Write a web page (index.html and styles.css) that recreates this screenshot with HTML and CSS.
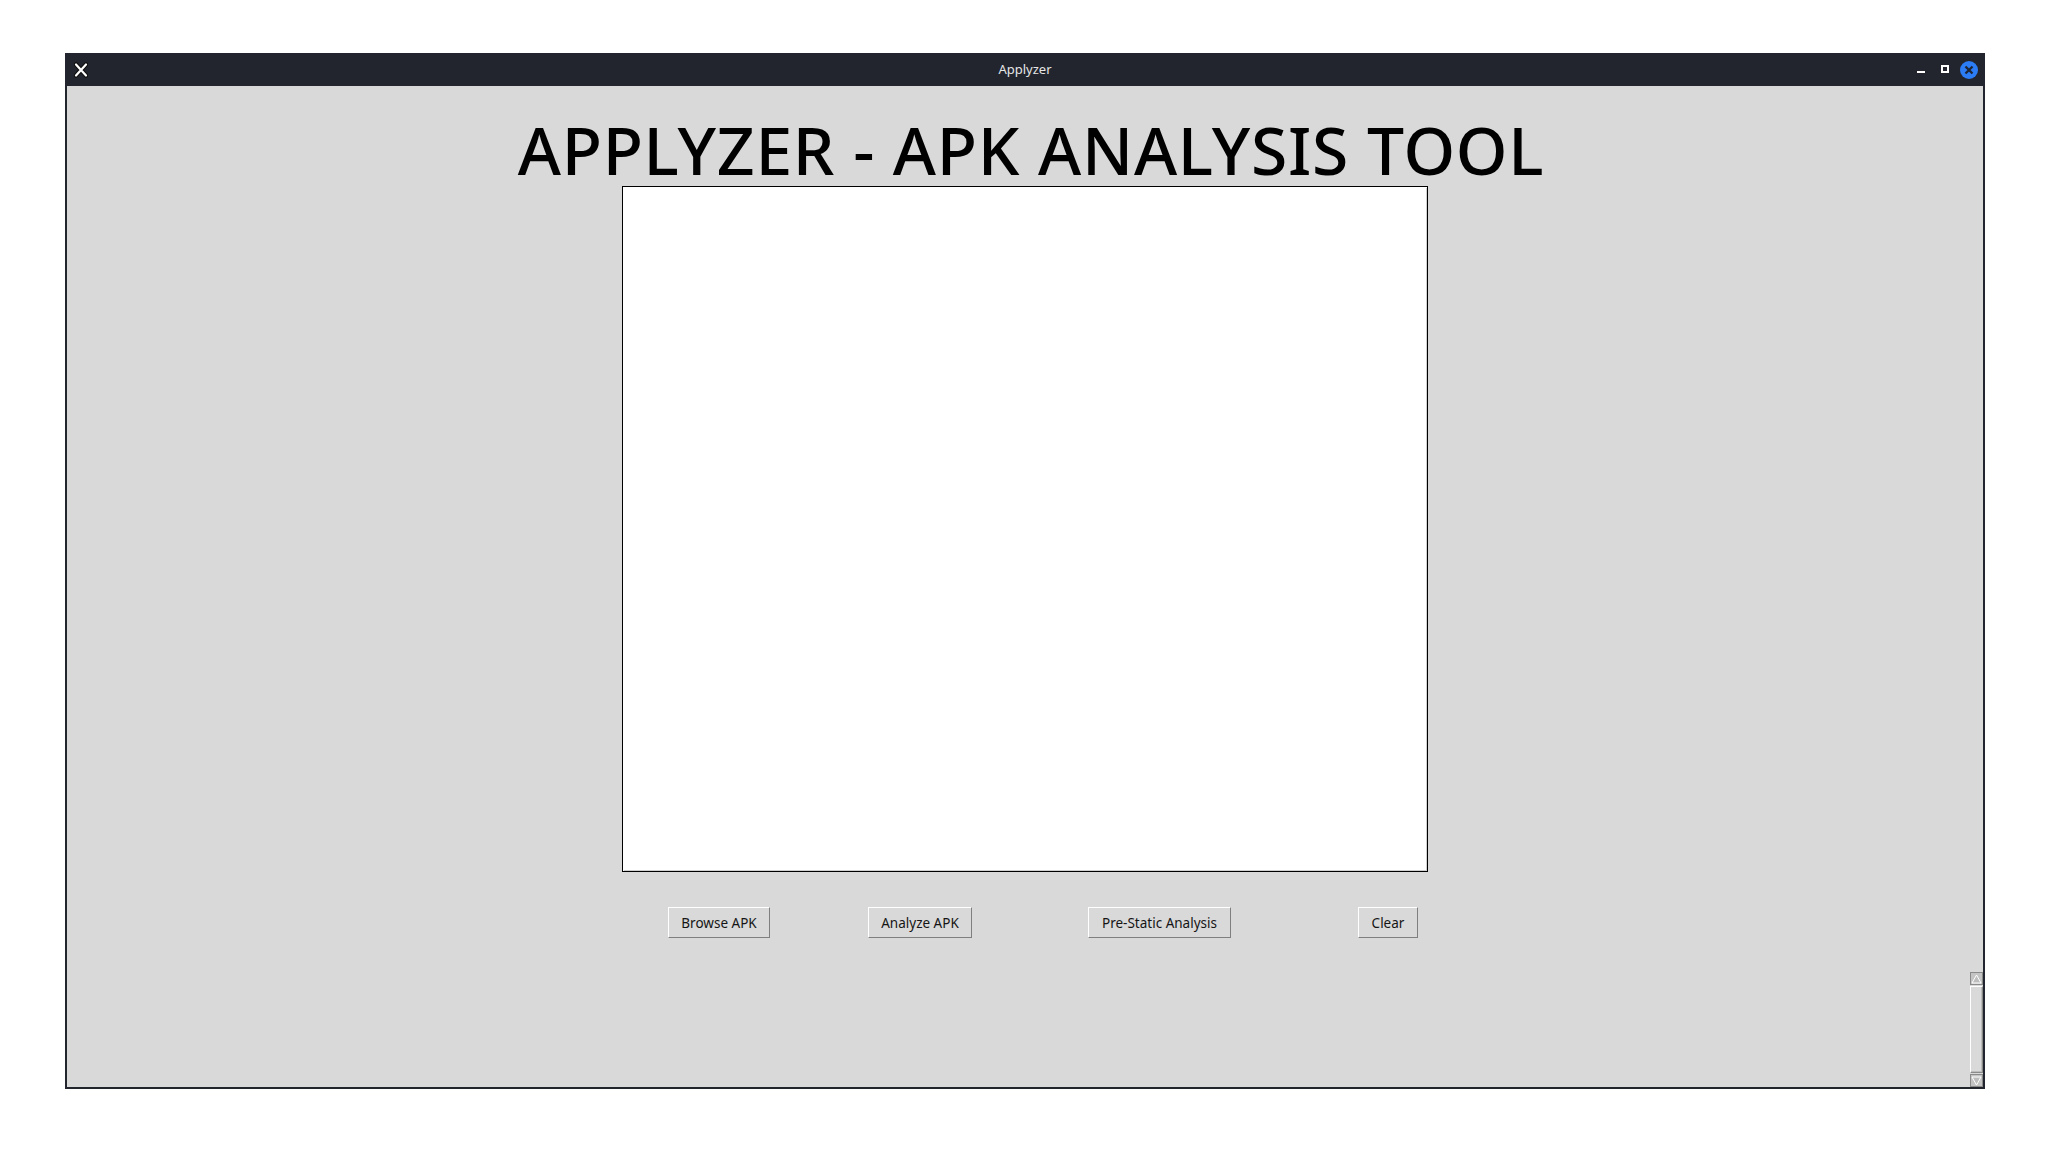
FILE: index.html
```html
<!DOCTYPE html>
<html>
<head>
<meta charset="utf-8">
<title>Applyzer</title>
<link rel="stylesheet" href="styles.css">
</head>
<body>
<div class="window">
  <div class="titlebar">
    <div class="tb-left">
      <svg class="tb-x" width="14" height="16" viewBox="0 0 14 16">
        <path d="M2 2.5 L12 13.5 M12 2.5 L2 13.5" stroke="#111" stroke-width="4.5" stroke-linecap="round"/>
        <path d="M2 2.5 L12 13.5 M12 2.5 L2 13.5" stroke="#fff" stroke-width="2.2" stroke-linecap="round"/>
      </svg>
    </div>
    <div class="tb-title">Applyzer</div>
    <div class="tb-right">
      <span class="tb-min"></span>
      <span class="tb-max"></span>
      <svg class="tb-close" width="18" height="18" viewBox="0 0 18 18">
        <circle cx="9" cy="9" r="9" fill="#2b7cf5"/>
        <path d="M5.5 5.5 L12.5 12.5 M12.5 5.5 L5.5 12.5" stroke="#1d2433" stroke-width="2.3"/>
      </svg>
    </div>
  </div>
  <div class="content">
    <h1 class="heading">APPLYZER - APK ANALYSIS TOOL</h1>
    <div class="textbox"></div>
    <div class="buttons">
      <button class="btn btn-browse">Browse APK</button>
      <button class="btn btn-analyze">Analyze APK</button>
      <button class="btn btn-pre">Pre-Static Analysis</button>
      <button class="btn btn-clear">Clear</button>
    </div>
    <div class="scrollbar">
      <div class="sb-arrow sb-up">
        <svg width="11" height="10" viewBox="0 0 11 10"><path d="M5.5 1 L10 9 L1 9 Z" fill="#bdbdbd" stroke="#fff" stroke-width="1"/></svg>
      </div>
      <div class="sb-slider"></div>
      <div class="sb-arrow sb-down">
        <svg width="11" height="10" viewBox="0 0 11 10"><path d="M1 1 L10 1 L5.5 9 Z" fill="#bdbdbd" stroke="#fff" stroke-width="1"/></svg>
      </div>
    </div>
  </div>
</div>
</body>
</html>
```
FILE: styles.css
```css
html, body {
  margin: 0;
  padding: 0;
  background: #ffffff;
}
body {
  padding: 53px 0 0 65px;
  font-family: "Noto Sans", "Open Sans", sans-serif;
}
.window {
  width: 1920px;
  height: 1036px;
  background: #22252e;
  display: flex;
  flex-direction: column;
  box-sizing: border-box;
  padding: 0 2px 2px 2px;
}
.titlebar {
  height: 33px;
  flex: none;
  display: grid;
  grid-template-columns: 1fr auto 1fr;
  align-items: center;
  margin: 0 -2px;
}
.tb-left {
  display: flex;
  align-items: center;
  padding-left: 9px;
}
.tb-x { display: block; }
.tb-title {
  color: #e6e6e6;
  font-size: 13px;
  line-height: 16px;
  margin-top: -1px;
}
.tb-right {
  display: flex;
  justify-content: flex-end;
  align-items: center;
  padding-right: 7px;
}
.tb-min {
  width: 8px;
  height: 2px;
  background: #fff;
  margin-top: 5px;
}
.tb-max {
  width: 4px;
  height: 4px;
  border: 2px solid #fff;
  margin-left: 16px;
  margin-top: -1px;
}
.tb-close {
  display: block;
  margin-left: 11px;
}
.content {
  flex: 1;
  background: #d9d9d9;
  position: relative;
  display: flex;
  flex-direction: column;
  align-items: center;
  padding-top: 30px;
  box-sizing: border-box;
}
.heading {
  margin: 0;
  padding-left: 12px;
  font-weight: 500;
  font-size: 66px;
  line-height: 66px;
  color: #000;
  letter-spacing: 0.7px;
  white-space: nowrap;
}
.textbox {
  margin-top: 4px;
  width: 806px;
  height: 686px;
  box-sizing: border-box;
  background: #fff;
  border: 1px solid #000;
  box-shadow: inset 1px 1px 0 #fff, inset -1px -1px 0 #d0d0d0;
}
.buttons {
  display: flex;
  margin-top: 35px;
  width: 806px;
  padding-left: 46px;
  box-sizing: border-box;
}
.btn {
  font-family: "Noto Sans", "Open Sans", sans-serif;
  font-size: 13.5px;
  font-weight: 450;
  color: #151515;
  background: #d9d9d9;
  height: 31px;
  box-sizing: border-box;
  padding: 0;
  border: 1px solid;
  border-color: #ffffff #7f7f7f #7f7f7f #ffffff;
  text-align: center;
  line-height: 28px;
}
.btn-browse { width: 102px; }
.btn-analyze { width: 104px; margin-left: 98px; }
.btn-pre { width: 143px; margin-left: 116px; }
.btn-clear { width: 60px; margin-left: 127px; }
.scrollbar {
  position: absolute;
  right: 0;
  bottom: 0;
  width: 13px;
  height: 115px;
  background: #d9d9d9;
  display: flex;
  flex-direction: column;
  box-sizing: border-box;
}
.sb-arrow {
  height: 13px;
  background: #c4c4c4;
  display: flex;
  align-items: center;
  justify-content: center;
  border: 1px solid #8a8a8a;
  box-sizing: border-box;
}
.sb-arrow svg { display: block; }
.sb-slider {
  flex: 1;
  margin: 1px 0;
  border: 1px solid;
  border-color: #ffffff #8a8a8a #8a8a8a #ffffff;
  background: #d9d9d9;
  box-shadow: inset -1px -1px 0 #bdbdbd;
}
```
